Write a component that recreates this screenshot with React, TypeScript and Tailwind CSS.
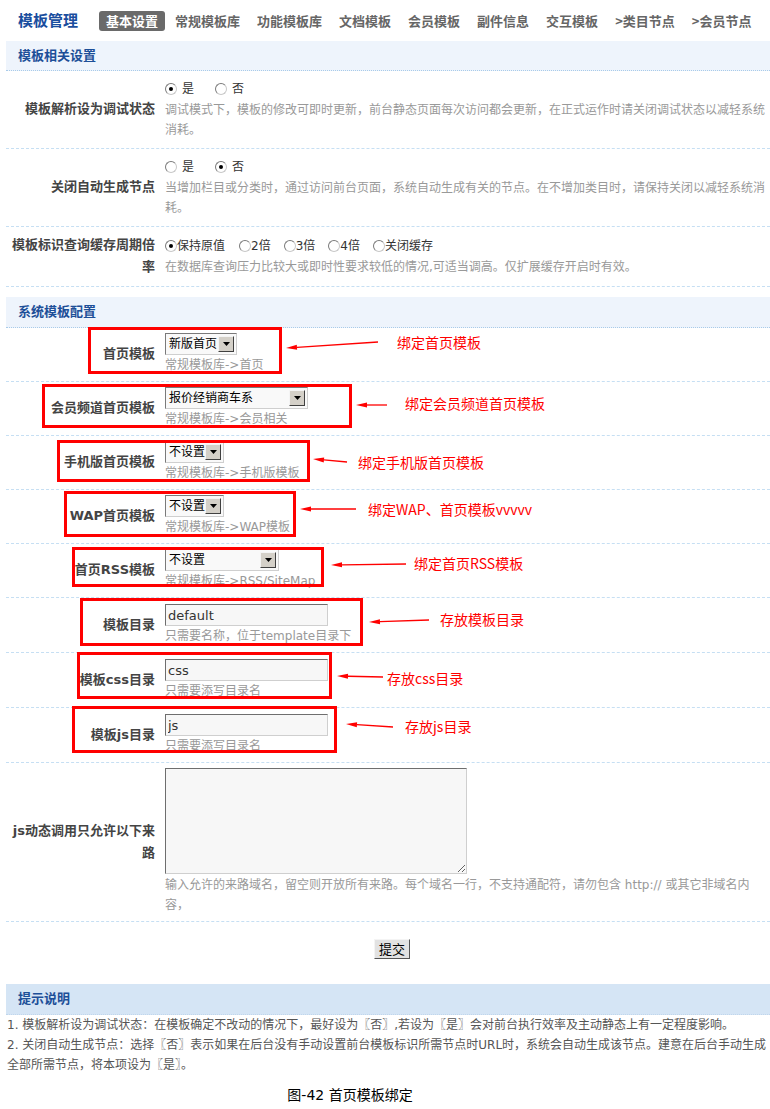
import React from "react";

const FONT = "font-['DejaVu_Sans','Noto_Sans_CJK_SC',sans-serif]";

function Radio({ checked = false }: { checked?: boolean }) {
  return (
    <span className="inline-flex w-[12px] h-[12px] shrink-0 items-center justify-center rounded-full border border-t-[#7a7a7a] border-l-[#7a7a7a] border-r-[#c8c8c8] border-b-[#c8c8c8] bg-white">
      {checked && <span className="w-[4px] h-[4px] rounded-full bg-black" />}
    </span>
  );
}

function Select({ text, w }: { text: string; w: string }) {
  return (
    <div
      className={
        "flex items-center justify-between h-[22px] bg-[#f9f9f9] border border-t-[#7a7a7a] border-l-[#7a7a7a] border-r-[#cfcfcf] border-b-[#cfcfcf] pl-[3px] pr-[2px] " +
        w
      }
    >
      <span className="text-[12px] leading-none text-black whitespace-nowrap">{text}</span>
      <span className="flex w-[16px] h-[16px] items-center justify-center bg-[#d4d0c8] border border-t-[#f4f4f4] border-l-[#f4f4f4] border-r-[#404040] border-b-[#404040]">
        <svg width="7" height="4" viewBox="0 0 7 4">
          <path d="M0 0H7L3.5 4Z" fill="#000" />
        </svg>
      </span>
    </div>
  );
}

function TextInput({ value }: { value: string }) {
  return (
    <input
      readOnly
      value={value}
      className="block w-[163px] h-[22px] bg-[#f7f7f7] border border-t-[#6e6e6e] border-l-[#6e6e6e] border-r-[#cfcfcf] border-b-[#cfcfcf] px-[2px] text-[13px] text-[#333] outline-none"
    />
  );
}

function Hint({ children }: { children: React.ReactNode }) {
  return <div className="text-[12px] leading-[20px] text-[#999]">{children}</div>;
}

function Row({
  label,
  children,
  pad,
}: {
  label: React.ReactNode;
  children: React.ReactNode;
  pad: string;
}) {
  return (
    <div className={"flex items-center border-b border-dashed border-[#c6dff3] " + pad}>
      <div className="w-[149px] shrink-0 pl-[4px] text-right text-[13px] font-bold leading-[22px] text-[#444]">
        {label}
      </div>
      <div className="min-w-0 flex-1 pl-[10px] pr-[4px]">{children}</div>
    </div>
  );
}

function SectionHeader({ children, cls }: { children: React.ReactNode; cls: string }) {
  return (
    <div className={"flex items-center pl-[12px] text-[13px] font-bold text-[#1d4f98] " + cls}>
      {children}
    </div>
  );
}

const arrows: number[][] = [
  [378, 342, 286, 348],
  [387, 405, 356, 405],
  [347, 462, 313, 459],
  [356, 509, 300, 509],
  [406, 564, 331, 565],
  [429, 620, 369, 622],
  [383, 677, 337, 676],
  [393, 727, 346, 724],
];

export default function App() {
  const navItems = ["常规模板库", "功能模板库", "文档模板", "会员模板", "副件信息", "交互模板", ">类目节点", ">会员节点"];
  return (
    <div className={"relative w-[770px] h-[1109px] overflow-hidden bg-white " + FONT}>
      <div className="pl-[6px]">
        {/* Top nav */}
        <div className="flex h-[41px] items-center pl-[12px] font-['Noto_Sans_CJK_SC',sans-serif]">
          <span className="text-[15px] font-bold text-[#1a4e9e]">模板管理</span>
          <span className="ml-[21px] flex h-[20px] items-center rounded-[3px] bg-[#6a6a6a] px-[7px] text-[13px] font-bold text-white">
            基本设置
          </span>
          <div className="ml-[10px] flex items-center gap-[17px] text-[13px] font-bold text-[#666]">
            {navItems.map((n) => (
              <span key={n}>{n}</span>
            ))}
          </div>
        </div>

        {/* Section 1 */}
        <SectionHeader cls="h-[30px] bg-[#eef4fc] border-b border-dotted border-[#a9cbe9]">模板相关设置</SectionHeader>

        <Row label="模板解析设为调试状态" pad="pt-[7px] pb-[8px]">
          <div className="flex h-[22px] items-center text-[12px] text-[#333]">
            <Radio checked />
            <span className="ml-[5px]">是</span>
            <span className="ml-[21px]" />
            <Radio />
            <span className="ml-[5px]">否</span>
          </div>
          <Hint>
            调试模式下，模板的修改可即时更新，前台静态页面每次访问都会更新，在正式运作时请关闭调试状态以减轻系统消耗。
          </Hint>
        </Row>

        <Row label="关闭自动生成节点" pad="pt-[7px] pb-[8px]">
          <div className="flex h-[22px] items-center text-[12px] text-[#333]">
            <Radio />
            <span className="ml-[5px]">是</span>
            <span className="ml-[21px]" />
            <Radio checked />
            <span className="ml-[5px]">否</span>
          </div>
          <Hint>
            当增加栏目或分类时，通过访问前台页面，系统自动生成有关的节点。在不增加类目时，请保持关闭以减轻系统消耗。
          </Hint>
        </Row>

        <Row label="模板标识查询缓存周期倍率" pad="pt-[7px] pb-[8px]">
          <div className="flex h-[22px] items-center text-[12px] text-[#333]">
            <Radio checked />
            <span>保持原值</span>
            <span className="ml-[14px]" />
            <Radio />
            <span>2倍</span>
            <span className="ml-[13px]" />
            <Radio />
            <span>3倍</span>
            <span className="ml-[13px]" />
            <Radio />
            <span>4倍</span>
            <span className="ml-[13px]" />
            <Radio />
            <span>关闭缓存</span>
          </div>
          <Hint>在数据库查询压力比较大或即时性要求较低的情况,可适当调高。仅扩展缓存开启时有效。</Hint>
        </Row>

        {/* Section 2 */}
        <div className="mt-[10px]" />
        <SectionHeader cls="h-[31px] bg-[#eef4fc] border-b border-dotted border-[#a9cbe9]">系统模板配置</SectionHeader>

        <Row label="首页模板" pad="pt-[5px] pb-[6px]">
          <Select text="新版首页" w="w-[72px]" />
          <Hint>常规模板库-&gt;首页</Hint>
        </Row>
        <Row label="会员频道首页模板" pad="pt-[5px] pb-[6px]">
          <Select text="报价经销商车系" w="w-[143px]" />
          <Hint>常规模板库-&gt;会员相关</Hint>
        </Row>
        <Row label="手机版首页模板" pad="pt-[5px] pb-[6px]">
          <Select text="不设置" w="w-[59px]" />
          <Hint>常规模板库-&gt;手机版模板</Hint>
        </Row>
        <Row label="WAP首页模板" pad="pt-[5px] pb-[6px]">
          <Select text="不设置" w="w-[59px]" />
          <Hint>常规模板库-&gt;WAP模板</Hint>
        </Row>
        <Row label="首页RSS模板" pad="pt-[5px] pb-[6px]">
          <Select text="不设置" w="w-[114px]" />
          <Hint>常规模板库-&gt;RSS/SiteMap</Hint>
        </Row>
        <Row label="模板目录" pad="pt-[6px] pb-[6px]">
          <TextInput value="default" />
          <Hint>只需要名称，位于template目录下</Hint>
        </Row>
        <Row label="模板css目录" pad="pt-[6px] pb-[6px]">
          <TextInput value="css" />
          <Hint>只需要添写目录名</Hint>
        </Row>
        <Row label="模板js目录" pad="pt-[6px] pb-[6px]">
          <TextInput value="js" />
          <Hint>只需要添写目录名</Hint>
        </Row>
        <Row label="js动态调用只允许以下来路" pad="pt-[5px] pb-[6px]">
          <textarea
            readOnly
            className="mb-[1px] block h-[106px] w-[302px] border border-t-[#6e6e6e] border-l-[#6e6e6e] border-r-[#cfcfcf] border-b-[#cfcfcf] bg-[#f7f7f7] outline-none"
          />
          <Hint>
            输入允许的来路域名，留空则开放所有来路。每个域名一行，不支持通配符，请勿包含 http:// 或其它非域名内
            <br />
            容，
          </Hint>
        </Row>

        {/* Submit */}
        <div className="flex justify-center pl-[8px] pt-[17px] pb-[25px]">
          <button className="flex h-[20px] items-center border border-t-[#f4f4f4] border-l-[#f4f4f4] border-r-[#555] border-b-[#555] bg-[#e2e2e2] px-[4px] text-[13px] leading-none text-black">
            提交
          </button>
        </div>

        {/* Tips */}
        <SectionHeader cls="h-[31px] bg-[#d5e5f5] border-b border-dotted border-[#c0d6ec]">提示说明</SectionHeader>
        <div className="overflow-hidden whitespace-nowrap pl-[1px] text-[12px] leading-[20px] text-[#555]">
          <div>1. 模板解析设为调试状态：在模板确定不改动的情况下，最好设为〖否〗,若设为〖是〗会对前台执行效率及主动静态上有一定程度影响。</div>
          <div>
            2. 关闭自动生成节点：选择〖否〗表示如果在后台没有手动设置前台模板标识所需节点时URL时，系统会自动生成该节点。建意在后台手动生成
            <br />
            全部所需节点，将本项设为〖是〗。
          </div>
        </div>

        <div className="mt-[10px] w-[688px] text-center text-[14px] leading-[20px] text-black">图-42 首页模板绑定</div>
      </div>

      {/* Annotation overlay: red boxes */}
      <div className="pointer-events-none absolute left-[88px] top-[327px] h-[47px] w-[194px] border-[3px] border-[#ff0000]" />
      <div className="pointer-events-none absolute left-[42px] top-[384px] h-[44px] w-[310px] border-[3px] border-[#ff0000]" />
      <div className="pointer-events-none absolute left-[57px] top-[440px] h-[42px] w-[253px] border-[3px] border-[#ff0000]" />
      <div className="pointer-events-none absolute left-[64px] top-[491px] h-[46px] w-[232px] border-[3px] border-[#ff0000]" />
      <div className="pointer-events-none absolute left-[72px] top-[547px] h-[40px] w-[252px] border-[3px] border-[#ff0000]" />
      <div className="pointer-events-none absolute left-[80px] top-[598px] h-[48px] w-[283px] border-[3px] border-[#ff0000]" />
      <div className="pointer-events-none absolute left-[77px] top-[652px] h-[47px] w-[255px] border-[3px] border-[#ff0000]" />
      <div className="pointer-events-none absolute left-[72px] top-[706px] h-[47px] w-[265px] border-[3px] border-[#ff0000]" />

      {/* Annotation texts */}
      <div className="absolute left-[397px] top-[334px] text-[14px] leading-[16px] text-[#ff0000] font-['Noto_Sans_CJK_SC',sans-serif]">绑定首页模板</div>
      <div className="absolute left-[405px] top-[395px] text-[14px] leading-[16px] text-[#ff0000] font-['Noto_Sans_CJK_SC',sans-serif]">绑定会员频道首页模板</div>
      <div className="absolute left-[358px] top-[454px] text-[14px] leading-[16px] text-[#ff0000] font-['Noto_Sans_CJK_SC',sans-serif]">绑定手机版首页模板</div>
      <div className="absolute left-[368px] top-[501px] text-[14px] leading-[16px] text-[#ff0000] font-['Noto_Sans_CJK_SC',sans-serif]">绑定WAP、首页模板vvvvv</div>
      <div className="absolute left-[414px] top-[555px] text-[14px] leading-[16px] text-[#ff0000] font-['Noto_Sans_CJK_SC',sans-serif]">绑定首页RSS模板</div>
      <div className="absolute left-[440px] top-[611px] text-[14px] leading-[16px] text-[#ff0000] font-['Noto_Sans_CJK_SC',sans-serif]">存放模板目录</div>
      <div className="absolute left-[387px] top-[670px] text-[14px] leading-[16px] text-[#ff0000] font-['Noto_Sans_CJK_SC',sans-serif]">存放css目录</div>
      <div className="absolute left-[405px] top-[718px] text-[14px] leading-[16px] text-[#ff0000] font-['Noto_Sans_CJK_SC',sans-serif]">存放js目录</div>

      {/* Arrows */}
      <svg className="pointer-events-none absolute left-0 top-0" width={770} height={1109}>
        {arrows.map(([x1, y1, x2, y2], i) => {
          const dx = x2 - x1;
          const dy = y2 - y1;
          const L = Math.hypot(dx, dy);
          const ux = dx / L;
          const uy = dy / L;
          const bx = x2 - ux * 11;
          const by = y2 - uy * 11;
          const px = -uy * 2.5;
          const py = ux * 2.5;
          return (
            <g key={i}>
              <line x1={x1} y1={y1} x2={bx} y2={by} stroke="#ff0000" strokeWidth={1.3} />
              <polygon
                points={`${x2},${y2} ${bx + px},${by + py} ${bx - px},${by - py}`}
                fill="#ff0000"
              />
            </g>
          );
        })}
      </svg>
    </div>
  );
}
